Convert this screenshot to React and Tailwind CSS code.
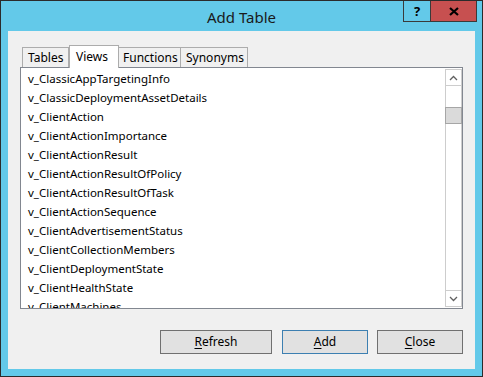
import React from "react";

const items = [
  "v_ClassicAppTargetingInfo",
  "v_ClassicDeploymentAssetDetails",
  "v_ClientAction",
  "v_ClientActionImportance",
  "v_ClientActionResult",
  "v_ClientActionResultOfPolicy",
  "v_ClientActionResultOfTask",
  "v_ClientActionSequence",
  "v_ClientAdvertisementStatus",
  "v_ClientCollectionMembers",
  "v_ClientDeploymentState",
  "v_ClientHealthState",
  "v_ClientMachines",
];

const font = { fontFamily: '"Noto Sans", "Open Sans", sans-serif' };

function Btn({ under, rest, w, isDefault }) {
  return (
    <div
      className={`h-[24px] flex items-center justify-center bg-[#e1e1e1] border text-[12px] text-black ${
        isDefault ? "border-[#3c7fb1]" : "border-[#707070]"
      }`}
      style={{ width: w }}
    >
      <span>
        <span className="underline underline-offset-2">{under}</span>
        {rest}
      </span>
    </div>
  );
}

export default function App() {
  return (
    <div
      className="w-[483px] h-[377px] border border-[#2b2b2b] bg-[#63c9e9] flex flex-col"
      style={font}
    >
      <div className="relative h-[30px] flex items-center justify-center">
        <span className="text-[15px] text-[#1a1a1a] mt-[2px]">Add Table</span>
        <div className="absolute right-[5px] top-0 flex h-[21px] border-x border-b border-[#3a3a3a]">
          <div className="w-[27px] flex items-center justify-center border-r border-[#3a3a3a] text-[13px] font-bold text-black leading-none">
            ?
          </div>
          <div className="w-[45px] bg-[#c75050] flex items-center justify-center">
            <svg width="10" height="9" viewBox="0 0 10 9">
              <path d="M1 1 L9 8 M9 1 L1 8" stroke="#000" strokeWidth="2.2" />
            </svg>
          </div>
        </div>
      </div>
      <div className="mx-[7px] h-[338px] bg-[#f0f0f0] flex flex-col">
        <div className="ml-[14px] mt-[13px] flex items-end h-[23px] text-[12px] text-black">
          <div className="h-[20px] px-[5px] flex items-center border border-b-0 border-[#acacac] bg-[#f0f0f0] w-[47px]">
            Tables
          </div>
          <div className="h-[23px] px-[6px] flex items-start pt-[2px] border border-b-0 border-[#acacac] bg-white w-[50px] -mb-px relative z-10">
            Views
          </div>
          <div className="h-[20px] px-[4px] flex items-center border border-b-0 border-l-0 border-[#acacac] bg-[#f0f0f0] w-[62px]">
            Functions
          </div>
          <div className="h-[20px] px-[5px] flex items-center border border-b-0 border-l-0 border-[#acacac] bg-[#f0f0f0] w-[67px]">
            Synonyms
          </div>
        </div>
        <div className="ml-[12px] w-[443px] h-[242px] border border-[#828790] bg-white flex overflow-hidden">
          <div className="flex-1 pl-[7px] pt-[1px] overflow-hidden">
            {items.map((t) => (
              <div key={t} className="h-[19px] flex items-center text-[11.5px] text-black whitespace-nowrap">
                {t}
              </div>
            ))}
          </div>
          <div className="w-[17px] my-[1px] flex flex-col border border-[#cdcdcd]">
            <div className="h-[16px] border-b border-[#cdcdcd] flex items-center justify-center">
              <svg width="9" height="6" viewBox="0 0 9 6">
                <path d="M1 5 L4.5 1.5 L8 5" stroke="#606060" strokeWidth="1.3" fill="none" />
              </svg>
            </div>
            <div className="flex-1 flex flex-col">
              <div className="h-[21px]" />
              <div className="h-[17px] bg-[#dadada] border-y border-[#a6a6a6] -mx-px border-x" />
              <div className="flex-1" />
            </div>
            <div className="h-[16px] border-t border-[#cdcdcd] flex items-center justify-center">
              <svg width="9" height="6" viewBox="0 0 9 6">
                <path d="M1 1 L4.5 4.5 L8 1" stroke="#606060" strokeWidth="1.3" fill="none" />
              </svg>
            </div>
          </div>
        </div>
        <div className="mt-[21px] ml-[152px] flex">
          <Btn under="R" rest="efresh" w={112} />
          <div className="w-[10px]" />
          <Btn under="A" rest="dd" w={86} isDefault />
          <div className="w-[9px]" />
          <Btn under="C" rest="lose" w={86} />
        </div>
      </div>
    </div>
  );
}
